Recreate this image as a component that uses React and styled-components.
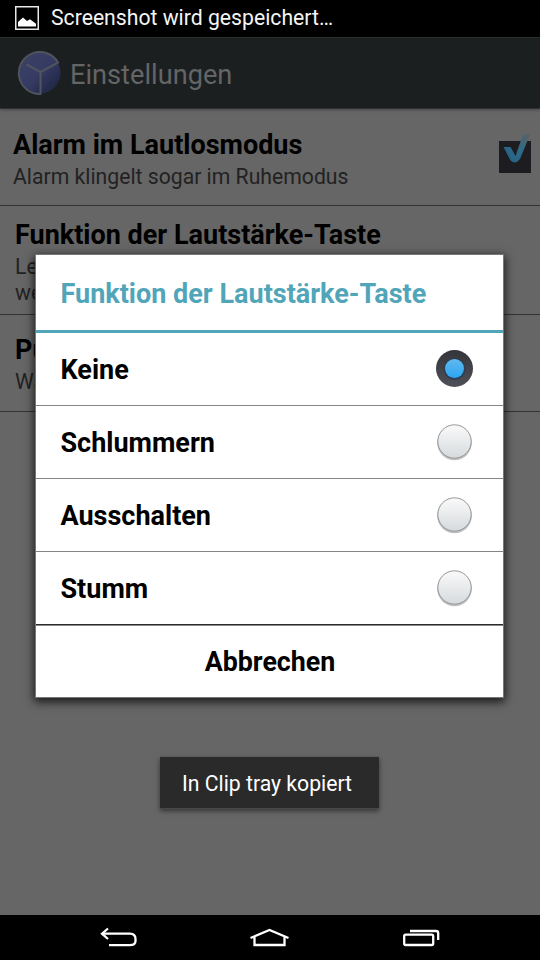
import React from 'react';
import styled, { createGlobalStyle } from 'styled-components';

const GlobalStyle = createGlobalStyle`
  * {
    box-sizing: border-box;
  }
  body {
    margin: 0;
    background: #000;
    font-family: Roboto, "Liberation Sans", sans-serif;
  }
`

const Screen = styled.div`
  position: relative;
  display: flex;
  flex-direction: column;
  width: 540px;
  height: 960px;
  overflow: hidden;
  background: #666;
`

const StatusBar = styled.header`
  display: flex;
  align-items: center;
  gap: 11px;
  height: 37px;
  padding: 0 14px 2px;
  background: #000;
  color: #f4f4f4;
  font-size: 21.2px;
  line-height: 34px;
  white-space: nowrap;
`

const ActionBar = styled.div`
  display: flex;
  align-items: center;
  gap: 7px;
  height: 72px;
  padding: 0 17px;
  background: #1c1f20;
  border-top: 1px solid #2c2e2f;
  border-bottom: 1px solid #303233;
  box-shadow: 0 1px 3px rgba(0, 0, 0, 0.3);
`

const ActionTitle = styled.h1`
  margin: 4px 0 0;
  color: #636566;
  font-size: 27.2px;
  font-weight: 400;
  line-height: 36px;
`

const Preferences = styled.main`
  flex: 1;
`

const Preference = styled.section`
  display: flex;
  justify-content: space-between;
  height: ${props => props.$height}px;
  padding: ${props => props.$top}px 8px 0 ${props => props.$left}px;
  border-bottom: 1px solid #333;
  white-space: nowrap;
`

const PreferenceTitle = styled.h2`
  margin: 0;
  color: #000;
  font-size: 27px;
  font-weight: 700;
  line-height: 36px;
`

const PreferenceSummary = styled.p`
  margin: 1px 0 0;
  color: #222;
  font-size: 21.2px;
  line-height: 26px;
`

const Dialog = styled.div`
  position: absolute;
  top: 254px;
  left: 35px;
  width: 469px;
  height: 444px;
  background: #fff;
  border: 1px solid #777;
  box-shadow: 0 3px 9px 1px rgba(0, 0, 0, 0.75);
`

const DialogTitle = styled.h2`
  height: 78px;
  margin: 0;
  padding: 0 24.500px;
  border-bottom: 3px solid #51a5b9;
  color: #51a5b9;
  font-size: 27px;
  font-weight: 700;
  line-height: 78px;
`

const Option = styled.label`
  display: flex;
  align-items: center;
  justify-content: space-between;
  height: 73px;
  padding: 1px 28px 0 24.500px;
  border-bottom: 1px solid ${props => (props.$last ? '#2b2b2b' : '#858585')};
  box-shadow: ${props => (props.$last ? '0 1px 0 #8a8a8a' : 'none')};
  color: #000;
  font-size: 27px;
  font-weight: 700;

  svg {
    margin-top: -2px;
  }
`

const CancelButton = styled.button`
  display: block;
  width: 100%;
  height: 72px;
  padding: 1px 0 0 1px;
  border: 0;
  background: none;
  color: #000;
  font: 700 26.8px Roboto, "Liberation Sans", sans-serif;
`

const Toast = styled.div`
  position: absolute;
  top: 757px;
  left: 160px;
  display: flex;
  align-items: center;
  width: 219px;
  height: 52px;
  padding: 2px 0 0 22px;
  background: #2a2a2a;
  border-bottom: 1px solid #474747;
  box-shadow: 0 2px 5px rgba(0, 0, 0, 0.5);
  color: #fff;
  font-size: 21.2px;
  white-space: nowrap;
`

const NavBar = styled.nav`
  display: flex;
  height: 45px;
  padding: 0 42px;
  background: #000;

  svg {
    flex: 1;
    height: 45px;
  }
`

const PictureIcon = () => (
  <svg width="26" height="26" viewBox="0 0 26 26">
    <rect x="1.75" y="1.75" width="22.5" height="22.5" fill="none" stroke="#e8e8e8" strokeWidth="1.5" />
    <path d="M4 21.500v-4.500l5-4.500 4 3.500 3-1.800 6 4.500V21.500z" fill="#fff" />
  </svg>
)

const ClockIcon = () => (
  <svg width="46" height="46" viewBox="0 0 46 46">
    <defs>
      <linearGradient id="face" x1="0" y1="0" x2="1" y2="1">
        <stop offset="0" stopColor="#3d4264" />
        <stop offset="0.500" stopColor="#353b63" />
        <stop offset="0.900" stopColor="#1f2542" />
      </linearGradient>
    </defs>
    <circle cx="23" cy="23" r="20.500" fill="url(#face)" />
    <path d="M23.500 22L41 12.500A21 21 0 1 0 23.500 44z" fill="none" stroke="#50545e" strokeWidth="2" />
    <path d="M9.500 14.500L23.500 22" stroke="#50545e" strokeWidth="2" />
  </svg>
)

const CheckIcon = () => (
  <svg width="34" height="48" viewBox="0 0 34 48">
    <defs>
      <linearGradient id="tick" x1="0" y1="1" x2="0.700" y2="0">
        <stop offset="0" stopColor="#245f86" />
        <stop offset="0.600" stopColor="#306a86" />
        <stop offset="1" stopColor="#53636a" />
      </linearGradient>
    </defs>
    <rect x="1" y="14" width="32" height="32" fill="#1d1d21" />
    <path d="M5.500 20h7l5 9L25 7.500L32.500 6.500L22 32Q17.500 38 12.500 33.500z" fill="url(#tick)" />
  </svg>
)

const RadioIcon = ({ checked }) => (
  <svg width="40" height="40" viewBox="0 0 40 40">
    <defs>
      <linearGradient id="knob" x1="0" y1="0" x2="0" y2="1">
        <stop offset="0" stopColor="#fafafa" />
        <stop offset="1" stopColor="#d6dadd" />
      </linearGradient>
      <linearGradient id="ring" x1="0" y1="0" x2="0" y2="1">
        <stop offset="0" stopColor="#34353a" />
        <stop offset="1" stopColor="#505158" />
      </linearGradient>
      <linearGradient id="dot" x1="0" y1="0" x2="0" y2="1">
        <stop offset="0" stopColor="#62b8ed" />
        <stop offset="1" stopColor="#2ba7f5" />
      </linearGradient>
    </defs>
    {checked ? (
      <>
        <circle cx="19.500" cy="19.500" r="18.500" fill="url(#ring)" />
        <circle cx="19.500" cy="20" r="11" fill="#263c56" opacity="0.700" />
        <circle cx="19.500" cy="19.500" r="9.500" fill="url(#dot)" />
      </>
    ) : (
      <>
        <circle cx="19.500" cy="21" r="17.300" fill="#999" opacity="0.600" />
        <circle cx="19.500" cy="19.500" r="16.700" fill="url(#knob)" stroke="#8b8b8b" strokeWidth="0.900" />
      </>
    )}
  </svg>
)

const BackIcon = () => (
  <svg viewBox="0 0 152 45" fill="none" stroke="#fff" strokeWidth="2.300">
    <path d="M60 18.700H88Q93.500 19 93.500 24V26Q93.500 30.200 88 30.200H67" />
    <path d="M66 13.500L60 18.700L66 24" />
  </svg>
)

const HomeIcon = () => (
  <svg viewBox="0 0 152 45" fill="none" stroke="#fff" strokeWidth="2.300">
    <path d="M56.500 23L75.500 15L94.500 23M60.500 22V30H90.500V22" />
  </svg>
)

const RecentIcon = () => (
  <svg viewBox="0 0 152 45" fill="none" stroke="#fff" strokeWidth="2.300">
    <rect x="58.200" y="19.700" width="29" height="10.300" rx="1.500" />
    <path d="M64 16H90Q92.200 16 92.200 18V25" />
  </svg>
)

const options = ['Keine', 'Schlummern', 'Ausschalten', 'Stumm'];

const App = () => (
  <Screen>
    <GlobalStyle />
    <StatusBar>
      <PictureIcon />
      <span>Screenshot wird gespeichert…</span>
    </StatusBar>
    <ActionBar>
      <ClockIcon />
      <ActionTitle>Einstellungen</ActionTitle>
    </ActionBar>
    <Preferences>
      <Preference $height={97} $top={18} $left={13}>
        <div>
          <PreferenceTitle>Alarm im Lautlosmodus</PreferenceTitle>
          <PreferenceSummary>Alarm klingelt sogar im Ruhemodus</PreferenceSummary>
        </div>
        <CheckIcon />
      </Preference>
      <Preference $height={109} $top={11} $left={15}>
        <div>
          <PreferenceTitle>Funktion der Lautstärke-Taste</PreferenceTitle>
          <PreferenceSummary>Le<br />we</PreferenceSummary>
        </div>
      </Preference>
      <Preference $height={97} $top={17} $left={15}>
        <div>
          <PreferenceTitle>Pu</PreferenceTitle>
          <PreferenceSummary>Wa</PreferenceSummary>
        </div>
      </Preference>
    </Preferences>
    <NavBar>
      <BackIcon />
      <HomeIcon />
      <RecentIcon />
    </NavBar>
    <Dialog>
      <DialogTitle>Funktion der Lautstärke-Taste</DialogTitle>
      {options.map((option, i) => (
        <Option key={option} $last={i === options.length - 1}>
          {option}
          <RadioIcon checked={i === 0} />
        </Option>
      ))}
      <CancelButton>Abbrechen</CancelButton>
    </Dialog>
    <Toast>In Clip tray kopiert</Toast>
  </Screen>
)

export default App;
